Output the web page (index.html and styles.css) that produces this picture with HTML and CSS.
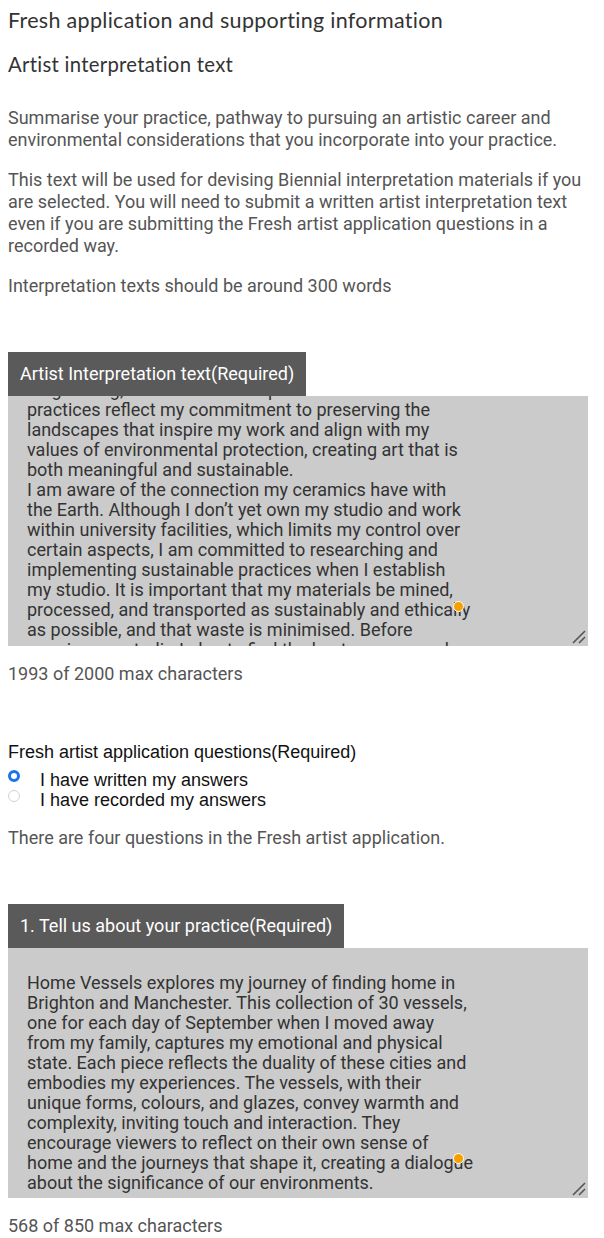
FILE: index.html
```html
<!DOCTYPE html>
<html lang="en">
<head>
<meta charset="utf-8">
<title>Fresh application</title>
<link rel="stylesheet" href="styles.css">
</head>
<body>
<main class="page">
  <h1 class="title">Fresh application and supporting information</h1>
  <h2 class="subtitle">Artist interpretation text</h2>
  <p class="intro first">Summarise your practice, pathway to pursuing an artistic career and environmental considerations that you incorporate into your practice.</p>
  <p class="intro">This text will be used for devising Biennial interpretation materials if you are selected. You will need to submit a written artist interpretation text even if you are submitting the Fresh artist application questions in a recorded way.</p>
  <p class="intro">Interpretation texts should be around 300 words</p>

  <section class="field">
    <div class="field-label">Artist Interpretation text(Required)</div>
    <div class="textbox">
      <div class="textbox-content scrolled">long lasting, rather than mass produced. These
practices reflect my commitment to preserving the
landscapes that inspire my work and align with my
values of environmental protection, creating art that is
both meaningful and sustainable.
I am aware of the connection my ceramics have with
the Earth. Although I don’t yet own my studio and work
within university facilities, which limits my control over
certain aspects, I am committed to researching and
implementing sustainable practices when I establish
my studio. It is important that my materials be mined,
processed, and transported as sustainably and ethically
as possible, and that waste is minimised. Before
opening my studio I plan to find the best sources and</div>
      <span class="caret-dot"></span>
      <svg class="resize" width="16" height="16" viewBox="0 0 16 16"><path d="M2 14 L14 2 M8 14 L14 8" stroke="#555" stroke-width="1.6" fill="none"/></svg>
    </div>
    <div class="counter">1993 of 2000 max characters</div>
  </section>

  <fieldset class="choice">
    <legend class="choice-legend">Fresh artist application questions(Required)</legend>
    <label class="radio-row"><span class="radio checked"></span><span>I have written my answers</span></label>
    <label class="radio-row"><span class="radio"></span><span>I have recorded my answers</span></label>
  </fieldset>
  <p class="intro note">There are four questions in the Fresh artist application.</p>

  <section class="field second">
    <div class="field-label">1. Tell us about your practice(Required)</div>
    <div class="textbox">
      <div class="textbox-content padded">Home Vessels explores my journey of finding home in
Brighton and Manchester. This collection of 30 vessels,
one for each day of September when I moved away
from my family, captures my emotional and physical
state. Each piece reflects the duality of these cities and
embodies my experiences. The vessels, with their
unique forms, colours, and glazes, convey warmth and
complexity, inviting touch and interaction. They
encourage viewers to reflect on their own sense of
home and the journeys that shape it, creating a dialogue
about the significance of our environments.</div>
      <span class="caret-dot"></span>
      <svg class="resize" width="16" height="16" viewBox="0 0 16 16"><path d="M2 14 L14 2 M8 14 L14 8" stroke="#555" stroke-width="1.6" fill="none"/></svg>
    </div>
    <div class="counter">568 of 850 max characters</div>
  </section>
</main>
</body>
</html>
```

FILE: styles.css
```css
html, body {
  margin: 0;
  padding: 0;
  background: #ffffff;
}

.page {
  padding: 8px 16px 0 8px;
  font-family: Roboto, "Liberation Sans", sans-serif;
}

.title {
  margin: 0;
  font-family: Lato, "Noto Sans", sans-serif;
  font-weight: 400;
  font-size: 21.5px;
  line-height: 24px;
  color: #333333;
  letter-spacing: 0.3px;
}

.subtitle {
  margin: 20px 0 0 0;
  font-family: Lato, "Noto Sans", sans-serif;
  font-weight: 400;
  font-size: 20.3px;
  line-height: 24px;
  color: #333333;
  letter-spacing: 0.3px;
}

.intro {
  margin: 18px 0 0 0;
  font-size: 18px;
  line-height: 22px;
  color: #555555;
}

.intro.first {
  margin-top: 31px;
}

.field {
  margin-top: 55px;
}

.field-label {
  display: inline-block;
  vertical-align: top;
  height: 44px;
  line-height: 44px;
  padding: 0 12px;
  background: #5a5a5a;
  color: #ffffff;
  font-size: 18px;
}

.textbox {
  position: relative;
  height: 250px;
  background: #cbcbcb;
  overflow: hidden;
}

.textbox-content {
  white-space: pre;
  padding-left: 19px;
  font-size: 18px;
  line-height: 20px;
  color: #333333;
}

.textbox-content.scrolled {
  margin-top: -16px;
}

.textbox-content.padded {
  padding-top: 25px;
}

.caret-dot {
  position: absolute;
  left: 445px;
  top: 205px;
  width: 9px;
  height: 9px;
  border-radius: 50%;
  background: #f5a000;
  border: 1.5px solid #ffffff;
}

.resize {
  position: absolute;
  right: 1px;
  bottom: 1px;
}

.counter {
  margin-top: 17px;
  font-size: 18px;
  line-height: 22px;
  color: #555555;
}

.choice {
  margin: 57px 0 0 0;
  padding: 0;
  border: none;
  font-family: "Liberation Sans", Arial, sans-serif;
}

.choice-legend {
  padding: 0;
  font-size: 18px;
  line-height: 20px;
  color: #111111;
  margin-bottom: 8px;
}

.radio-row {
  display: flex;
  align-items: flex-start;
  height: 20px;
  font-size: 18px;
  line-height: 20px;
  color: #111111;
}

.radio {
  box-sizing: border-box;
  width: 12px;
  height: 12px;
  margin: 0 20px 0 0;
  border-radius: 50%;
  border: 1px solid #d4d4d4;
  background: #ffffff;
  flex: none;
}

.radio.checked {
  border: 3.5px solid #1a73e8;
}

.note {
  margin-top: 17px;
}

.field.second {
  margin-top: 55px;
}
```
